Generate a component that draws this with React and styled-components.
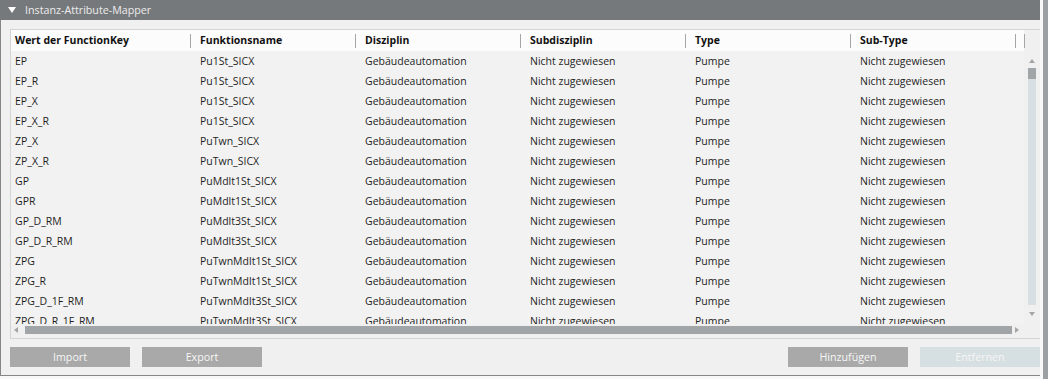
import React from 'react';
import styled, { createGlobalStyle } from 'styled-components';

const GlobalStyle = createGlobalStyle`
  html, body {
    margin: 0;
    padding: 0;
    background: #f8f8f8;
  }
  body {
    font-family: "Open Sans", "Noto Sans", sans-serif;
    font-size: 10.5px;
  }
`;

const Screen = styled.div`
  display: flex;
  width: 1048px;
  height: 379px;
  overflow: hidden;
`;

const Panel = styled.section`
  width: 1040px;
  height: 376px;
  flex: none;
  display: flex;
  flex-direction: column;
`;

const EdgeBar = styled.div`
  width: 5px;
  margin-left: 3px;
  background: #9da0a2;
`;

const TitleBar = styled.header`
  height: 20px;
  flex: none;
  display: flex;
  align-items: center;
  gap: 9px;
  padding-left: 8px;
  background: #76797b;
  color: #ececec;
  font-size: 10.7px;
`;

const PanelBody = styled.div`
  flex: 1;
  display: flex;
  flex-direction: column;
  gap: 8px;
  padding: 9px 0 8px 9px;
  background: #f0f0f0;
  border-left: 1px solid #868686;
  border-bottom: 1px solid #868686;
`;

const Table = styled.div`
  display: grid;
  grid-template-columns: 1013px 16px;
  grid-template-rows: 21px 273px 14px;
  border: 1px solid #d4d4d4;
  border-right: none;
`;

const columns = '180px repeat(5, 165px) 8px';

const HeaderRow = styled.div`
  display: grid;
  grid-template-columns: ${columns};
  background: #fcfcfc;
`;

const HeaderCell = styled.div`
  position: relative;
  padding-left: ${(p) => (p.$first ? 4 : 9)}px;
  line-height: 21px;
  font-weight: 700;
  color: #111;
  white-space: nowrap;

  &::after {
    content: '';
    position: absolute;
    right: 0;
    top: 4px;
    bottom: 3px;
    width: 1px;
    background: #a6a6a6;
  }
`;

const Rows = styled.div`
  overflow: hidden;
  background: #f2f2f2;
`;

const Row = styled.div`
  display: grid;
  grid-template-columns: ${columns};
  height: 20px;
`;

const Cell = styled.div`
  padding: 1px 0 0 ${(p) => (p.$first ? 4 : 9)}px;
  line-height: 19px;
  color: #1e1e1e;
  white-space: nowrap;
`;

const VScroll = styled.div`
  display: flex;
  flex-direction: column;
  align-items: center;
  padding: 8px 0;
`;

const VTrack = styled.div`
  width: 8px;
  height: 237px;
  margin: 5px 0 7px;
  background: #d7dfe2;
`;

const VThumb = styled.div`
  height: 11px;
  background: #a2a5a7;
`;

const Arrow = styled.span`
  width: 0;
  height: 0;
  flex: none;
  border-style: solid;
  border-color: transparent;
  ${(p) => p.$dir === 'up' && 'border-width: 0 3.5px 4px; border-bottom-color: #a3a6a8;'}
  ${(p) => p.$dir === 'down' && 'border-width: 4px 3.5px 0; border-top-color: #a3a6a8;'}
  ${(p) => p.$dir === 'left' && 'border-width: 3.5px 4px 3.5px 0; border-right-color: #a3a6a8;'}
  ${(p) => p.$dir === 'right' && 'border-width: 3.5px 0 3.5px 4px; border-left-color: #a3a6a8;'}
`;

const HScroll = styled.div`
  display: flex;
  align-items: center;
  height: 8px;
  margin-top: 2px;
  padding-left: 3px;
  gap: 7px;
`;

const HThumb = styled.div`
  width: 987px;
  height: 8px;
  background: #a2a5a7;
  margin-right: -4px;
`;

const ButtonRow = styled.div`
  display: flex;
  justify-content: space-between;
`;

const ButtonGroup = styled.div`
  display: flex;
  gap: 12px;
`;

const Button = styled.button`
  width: 120px;
  height: 20px;
  padding: 0;
  border: none;
  background: ${(p) => (p.disabled ? '#d6dfe2' : '#a9a9a9')};
  color: #f6f6f6;
  font-family: inherit;
  font-size: 10.7px;
`;

const headers = ['Wert der FunctionKey', 'Funktionsname', 'Disziplin', 'Subdisziplin', 'Type', 'Sub-Type', ''];

const data = [
  ['EP', 'Pu1St_SICX'],
  ['EP_R', 'Pu1St_SICX'],
  ['EP_X', 'Pu1St_SICX'],
  ['EP_X_R', 'Pu1St_SICX'],
  ['ZP_X', 'PuTwn_SICX'],
  ['ZP_X_R', 'PuTwn_SICX'],
  ['GP', 'PuMdlt1St_SICX'],
  ['GPR', 'PuMdlt1St_SICX'],
  ['GP_D_RM', 'PuMdlt3St_SICX'],
  ['GP_D_R_RM', 'PuMdlt3St_SICX'],
  ['ZPG', 'PuTwnMdlt1St_SICX'],
  ['ZPG_R', 'PuTwnMdlt1St_SICX'],
  ['ZPG_D_1F_RM', 'PuTwnMdlt3St_SICX'],
  ['ZPG_D_R_1F_RM', 'PuTwnMdlt3St_SICX'],
];

const Caret = () => (
  <svg width="8" height="6" viewBox="0 0 8 6">
    <polygon points="0,0 8,0 4,6" fill="#ffffff" />
  </svg>
);

export default function App() {
  return (
    <>
      <GlobalStyle />
      <Screen>
        <Panel>
          <TitleBar>
            <Caret />
            <span>Instanz-Attribute-Mapper</span>
          </TitleBar>
          <PanelBody>
            <Table>
              <HeaderRow>
                {headers.map((h, i) => (
                  <HeaderCell key={i} $first={i === 0}>{h}</HeaderCell>
                ))}
              </HeaderRow>
              <div />
              <Rows>
                {data.map(([key, name]) => (
                  <Row key={key}>
                    <Cell $first>{key}</Cell>
                    <Cell>{name}</Cell>
                    <Cell>Gebäudeautomation</Cell>
                    <Cell>Nicht zugewiesen</Cell>
                    <Cell>Pumpe</Cell>
                    <Cell>Nicht zugewiesen</Cell>
                    <Cell />
                  </Row>
                ))}
              </Rows>
              <VScroll>
                <Arrow $dir="up" />
                <VTrack>
                  <VThumb />
                </VTrack>
                <Arrow $dir="down" />
              </VScroll>
              <HScroll>
                <Arrow $dir="left" />
                <HThumb />
                <Arrow $dir="right" />
              </HScroll>
              <div />
            </Table>
            <ButtonRow>
              <ButtonGroup>
                <Button>Import</Button>
                <Button>Export</Button>
              </ButtonGroup>
              <ButtonGroup>
                <Button>Hinzufügen</Button>
                <Button disabled>Entfernen</Button>
              </ButtonGroup>
            </ButtonRow>
          </PanelBody>
        </Panel>
        <EdgeBar />
      </Screen>
    </>
  );
}
